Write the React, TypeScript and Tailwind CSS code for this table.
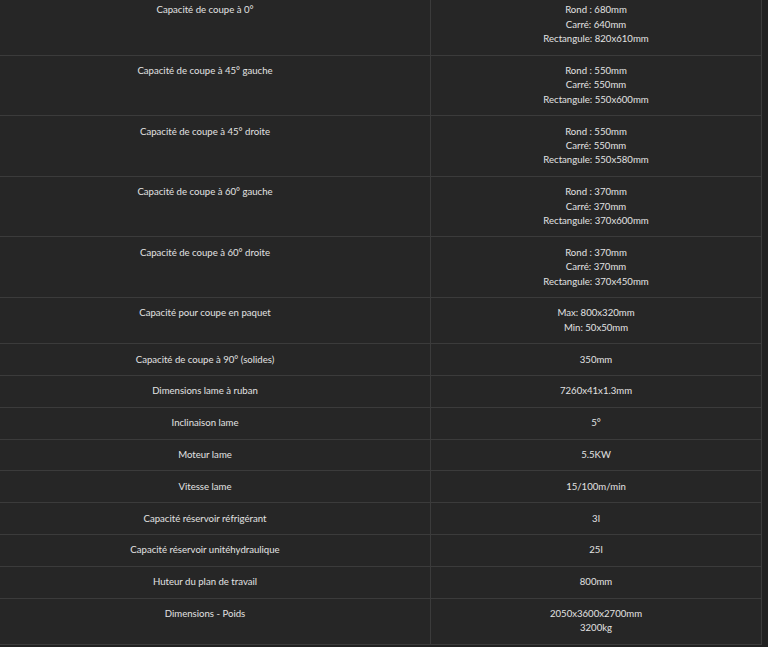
const specs: [string, string[]][] = [
  ["Capacité de coupe à 0°", ["Rond : 680mm", "Carré: 640mm", "Rectangule: 820x610mm"]],
  ["Capacité de coupe à 45° gauche", ["Rond : 550mm", "Carré: 550mm", "Rectangule: 550x600mm"]],
  ["Capacité de coupe à 45° droite", ["Rond : 550mm", "Carré: 550mm", "Rectangule: 550x580mm"]],
  ["Capacité de coupe à 60° gauche", ["Rond : 370mm", "Carré: 370mm", "Rectangule: 370x600mm"]],
  ["Capacité de coupe à 60° droite", ["Rond : 370mm", "Carré: 370mm", "Rectangule: 370x450mm"]],
  ["Capacité pour coupe en paquet", ["Max: 800x320mm", "Min: 50x50mm"]],
  ["Capacité de coupe à 90° (solides)", ["350mm"]],
  ["Dimensions lame à ruban", ["7260x41x1.3mm"]],
  ["Inclinaison lame", ["5°"]],
  ["Moteur lame", ["5.5KW"]],
  ["Vitesse lame", ["15/100m/min"]],
  ["Capacité réservoir réfrigérant", ["3l"]],
  ["Capacité réservoir unitéhydraulique", ["25l"]],
  ["Huteur du plan de travail", ["800mm"]],
  ["Dimensions - Poids", ["2050x3600x2700mm", "3200kg"]],
];

export default function App() {
  return (
    <div className="h-[647px] w-[768px] overflow-hidden bg-[#212121] font-['Lato',sans-serif] text-[9.6px] leading-[14.4px] text-[#e2e2e2]">
      {/* table is scrolled: its top and left edges sit outside the window */}
      <div className="-ml-[20px] -mt-[5px] w-[782px] border-r border-[#3b3b3b] bg-[#262626]">
        {specs.map(([label, values]) => (
          <div key={label} className="flex border-b border-[#3b3b3b]">
            <div className="w-[451px] shrink-0 border-r border-[#3b3b3b] px-2 pt-[8.4px] pb-[8px] text-center">
              {label}
            </div>
            <div className="flex-1 px-2 pt-[8.4px] pb-[8px] text-center">
              {values.map((v) => (
                <div key={v}>{v}</div>
              ))}
            </div>
          </div>
        ))}
      </div>
    </div>
  );
}
